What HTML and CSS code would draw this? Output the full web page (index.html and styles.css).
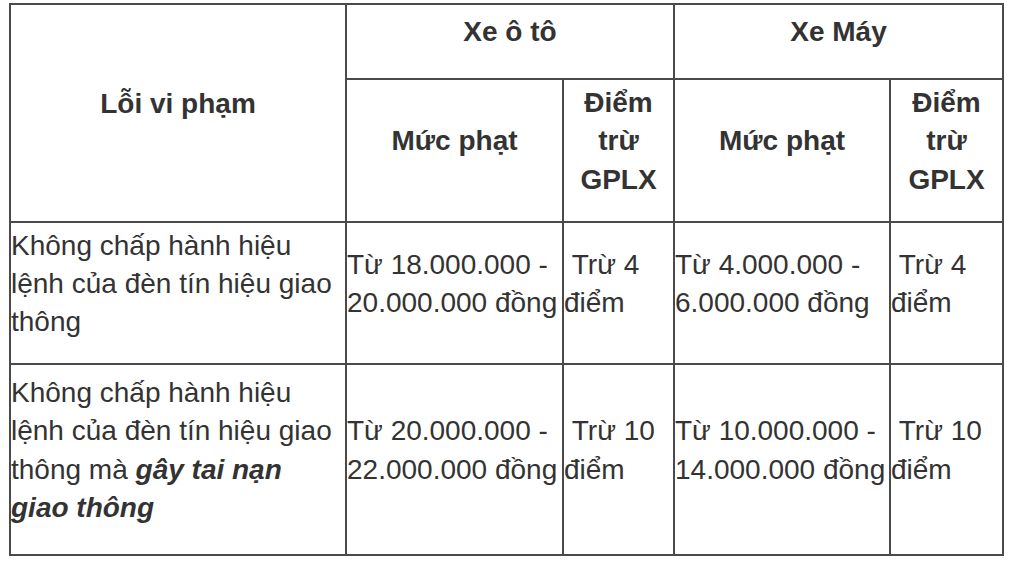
FILE: index.html
```html
<!DOCTYPE html>
<html lang="vi">
<head>
<meta charset="utf-8">
<title>Lỗi vi phạm</title>
<link rel="stylesheet" href="styles.css">
</head>
<body>
<table class="fines">
  <colgroup>
    <col class="c-err">
    <col class="c-fine">
    <col class="c-pts">
    <col class="c-fine2">
    <col class="c-pts2">
  </colgroup>
  <thead>
    <tr class="r-head1">
      <th rowspan="2">Lỗi vi phạm</th>
      <th colspan="2">Xe ô tô</th>
      <th colspan="2">Xe Máy</th>
    </tr>
    <tr class="r-head2">
      <th>Mức phạt</th>
      <th>Điểm trừ GPLX</th>
      <th>Mức phạt</th>
      <th>Điểm trừ GPLX</th>
    </tr>
  </thead>
  <tbody>
    <tr class="r-body1">
      <td>Không chấp hành hiệu lệnh của đèn tín hiệu giao thông</td>
      <td>Từ 18.000.000 - 20.000.000 đồng</td>
      <td>&nbsp;Trừ 4 điểm</td>
      <td>Từ 4.000.000 - 6.000.000 đồng</td>
      <td>&nbsp;Trừ 4 điểm</td>
    </tr>
    <tr class="r-body2">
      <td>Không chấp hành hiệu lệnh của đèn tín hiệu giao thông mà <strong><em>gây tai nạn giao thông</em></strong></td>
      <td>Từ 20.000.000 - 22.000.000 đồng</td>
      <td>&nbsp;Trừ 10 điểm</td>
      <td>Từ 10.000.000 - 14.000.000 đồng</td>
      <td>&nbsp;Trừ 10 điểm</td>
    </tr>
  </tbody>
</table>
</body>
</html>
```
FILE: styles.css
```css
html, body {
  margin: 0;
  padding: 0;
  background: #ffffff;
}

body {
  font-family: "Liberation Sans", Arial, Helvetica, sans-serif;
  font-size: 28px;
  line-height: 38.3px;
  color: #333333;
}

.fines {
  margin: 3px 0 0 9px;
  border-collapse: collapse;
  table-layout: fixed;
  width: 993px;
}

.c-err { width: 336px; }
.c-fine { width: 217px; }
.c-pts { width: 111px; }
.c-fine2 { width: 216px; }
.c-pts2 { width: 113px; }

.fines th,
.fines td {
  border: 2px solid #4a4a4a;
  vertical-align: middle;
  padding: 0 0 18px 0;
}

.fines th {
  font-weight: bold;
  text-align: center;
}

.fines td {
  text-align: left;
  font-weight: normal;
}

.r-head1 { height: 75px; }
.r-head2 { height: 143px; }
.r-body1 { height: 142px; }
.r-body2 { height: 191px; }

.fines strong em {
  font-weight: bold;
  font-style: italic;
}
```
